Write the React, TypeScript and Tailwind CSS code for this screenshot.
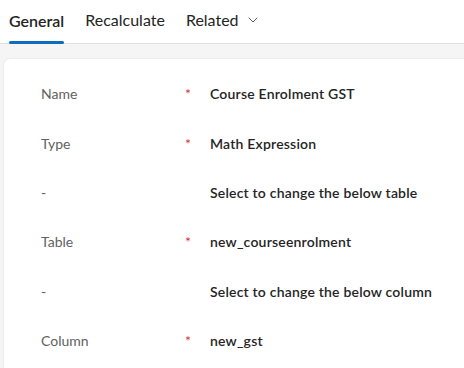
import { ChevronDown } from 'lucide-react';

const rows = [
  { label: 'Name', required: true, value: 'Course Enrolment GST' },
  { label: 'Type', required: true, value: 'Math Expression' },
  { label: '-', required: false, value: 'Select to change the below table' },
  { label: 'Table', required: true, value: 'new_courseenrolment' },
  { label: '-', required: false, value: 'Select to change the below column' },
  { label: 'Column', required: true, value: 'new_gst' },
];

export default function App() {
  return (
    <div className="w-[464px] h-[368px] overflow-hidden bg-[#f5f5f5] font-['Segoe_UI','Lato','Open_Sans',sans-serif]">
      <div className="h-[44px] bg-white border-b border-[#e0e0e0] flex items-end pl-[9px] gap-[21px]">
        <div className="flex flex-col">
          <span className="text-[16px] font-semibold text-[#242424] leading-none pb-[12px]">General</span>
          <div className="h-[3px] bg-[#0f6cbd] rounded-sm -mb-px" />
        </div>
        <span className="text-[16px] text-[#242424] leading-none pb-[15px]">Recalculate</span>
        <span className="text-[16px] text-[#242424] leading-none pb-[15px] flex items-center gap-[6px]">
          Related
          <ChevronDown size={16} strokeWidth={1.5} className="text-[#616161]" />
        </span>
      </div>
      <div className="pt-[15px] pl-[4px]">
        <div className="bg-white rounded-tl-[6px] shadow-[0_0_2px_rgba(0,0,0,0.12)] h-[320px] pt-[10px]">
          {rows.map((r, i) => (
            <div key={i} className="flex items-center h-[49.4px]">
              <span className="w-[181px] pl-[37px] text-[14px] text-[#616161]">{r.label}</span>
              <span className="w-[25px] text-[14px] text-[#d13438]">{r.required ? '*' : ''}</span>
              <span className="text-[14px] font-semibold tracking-[0.2px] text-[#242424]">{r.value}</span>
            </div>
          ))}
        </div>
      </div>
    </div>
  );
}
